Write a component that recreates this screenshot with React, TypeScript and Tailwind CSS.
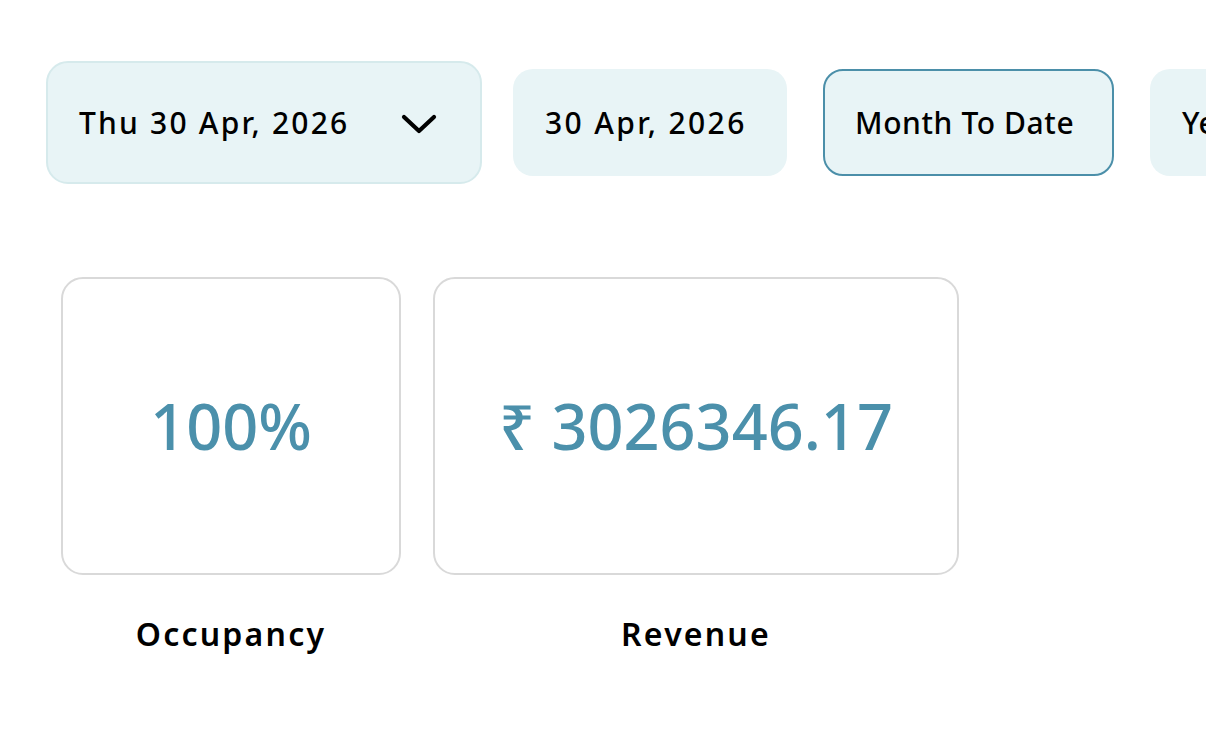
const ranges = [
  { label: "30 Apr, 2026", active: false, width: "w-[274px]", tracking: "tracking-[2.4px]" },
  { label: "Month To Date", active: true, width: "w-[291px]", tracking: "tracking-[0.6px]" },
  { label: "Year To Date", active: false, width: "w-[272px]", tracking: "tracking-[0.6px]" },
];

const stats = [
  { value: "100%", label: "Occupancy", width: "w-[340px]" },
  { value: "₹ 3026346.17", label: "Revenue", width: "w-[526px]" },
];

export default function App() {
  return (
    <div className="h-[742px] w-[1206px] overflow-hidden bg-white font-['Noto_Sans',sans-serif]">
      {/* Date filter bar */}
      <div className="flex items-center pt-[61px] pl-[46px] whitespace-nowrap">
        <button className="flex h-[123px] w-[436px] shrink-0 items-center justify-between rounded-[22px] border-2 border-[#d6eaec] bg-[#e8f4f6] pl-[31px] pr-[43px]">
          <span className="text-[30px] font-medium tracking-[2.2px] text-black">
            Thu 30 Apr, 2026
          </span>
          <svg width="36" height="20" viewBox="0 0 36 20" fill="none" className="mt-[2px]">
            <path
              d="M3 3L18 17L33 3"
              stroke="black"
              strokeWidth="4.2"
              strokeLinecap="round"
              strokeLinejoin="round"
            />
          </svg>
        </button>

        <div className="ml-[31px] flex gap-[36px]">
          {ranges.map((r) => (
            <button
              key={r.label}
              className={`flex h-[107px] shrink-0 items-center rounded-[20px] bg-[#e8f4f6] px-[30px] text-[30px] font-medium text-black ${r.width} ${r.tracking} ${
                r.active ? "border-2 border-[#4b8fa9]" : "border-2 border-transparent"
              }`}
            >
              {r.label}
            </button>
          ))}
        </div>
      </div>

      {/* Stat cards */}
      <div className="mt-[93px] ml-[61px] flex gap-[32px]">
        {stats.map((s) => (
          <div key={s.label} className={`flex flex-col items-center ${s.width}`}>
            <div className="flex h-[298px] w-full items-center justify-center rounded-[22px] border-2 border-[#d9d9d9]">
              <span className="text-[63px] font-medium text-[#4b90ab]">{s.value}</span>
            </div>
            <span className="mt-[35px] text-[32px] font-semibold tracking-[2.2px] text-black">
              {s.label}
            </span>
          </div>
        ))}
      </div>
    </div>
  );
}
